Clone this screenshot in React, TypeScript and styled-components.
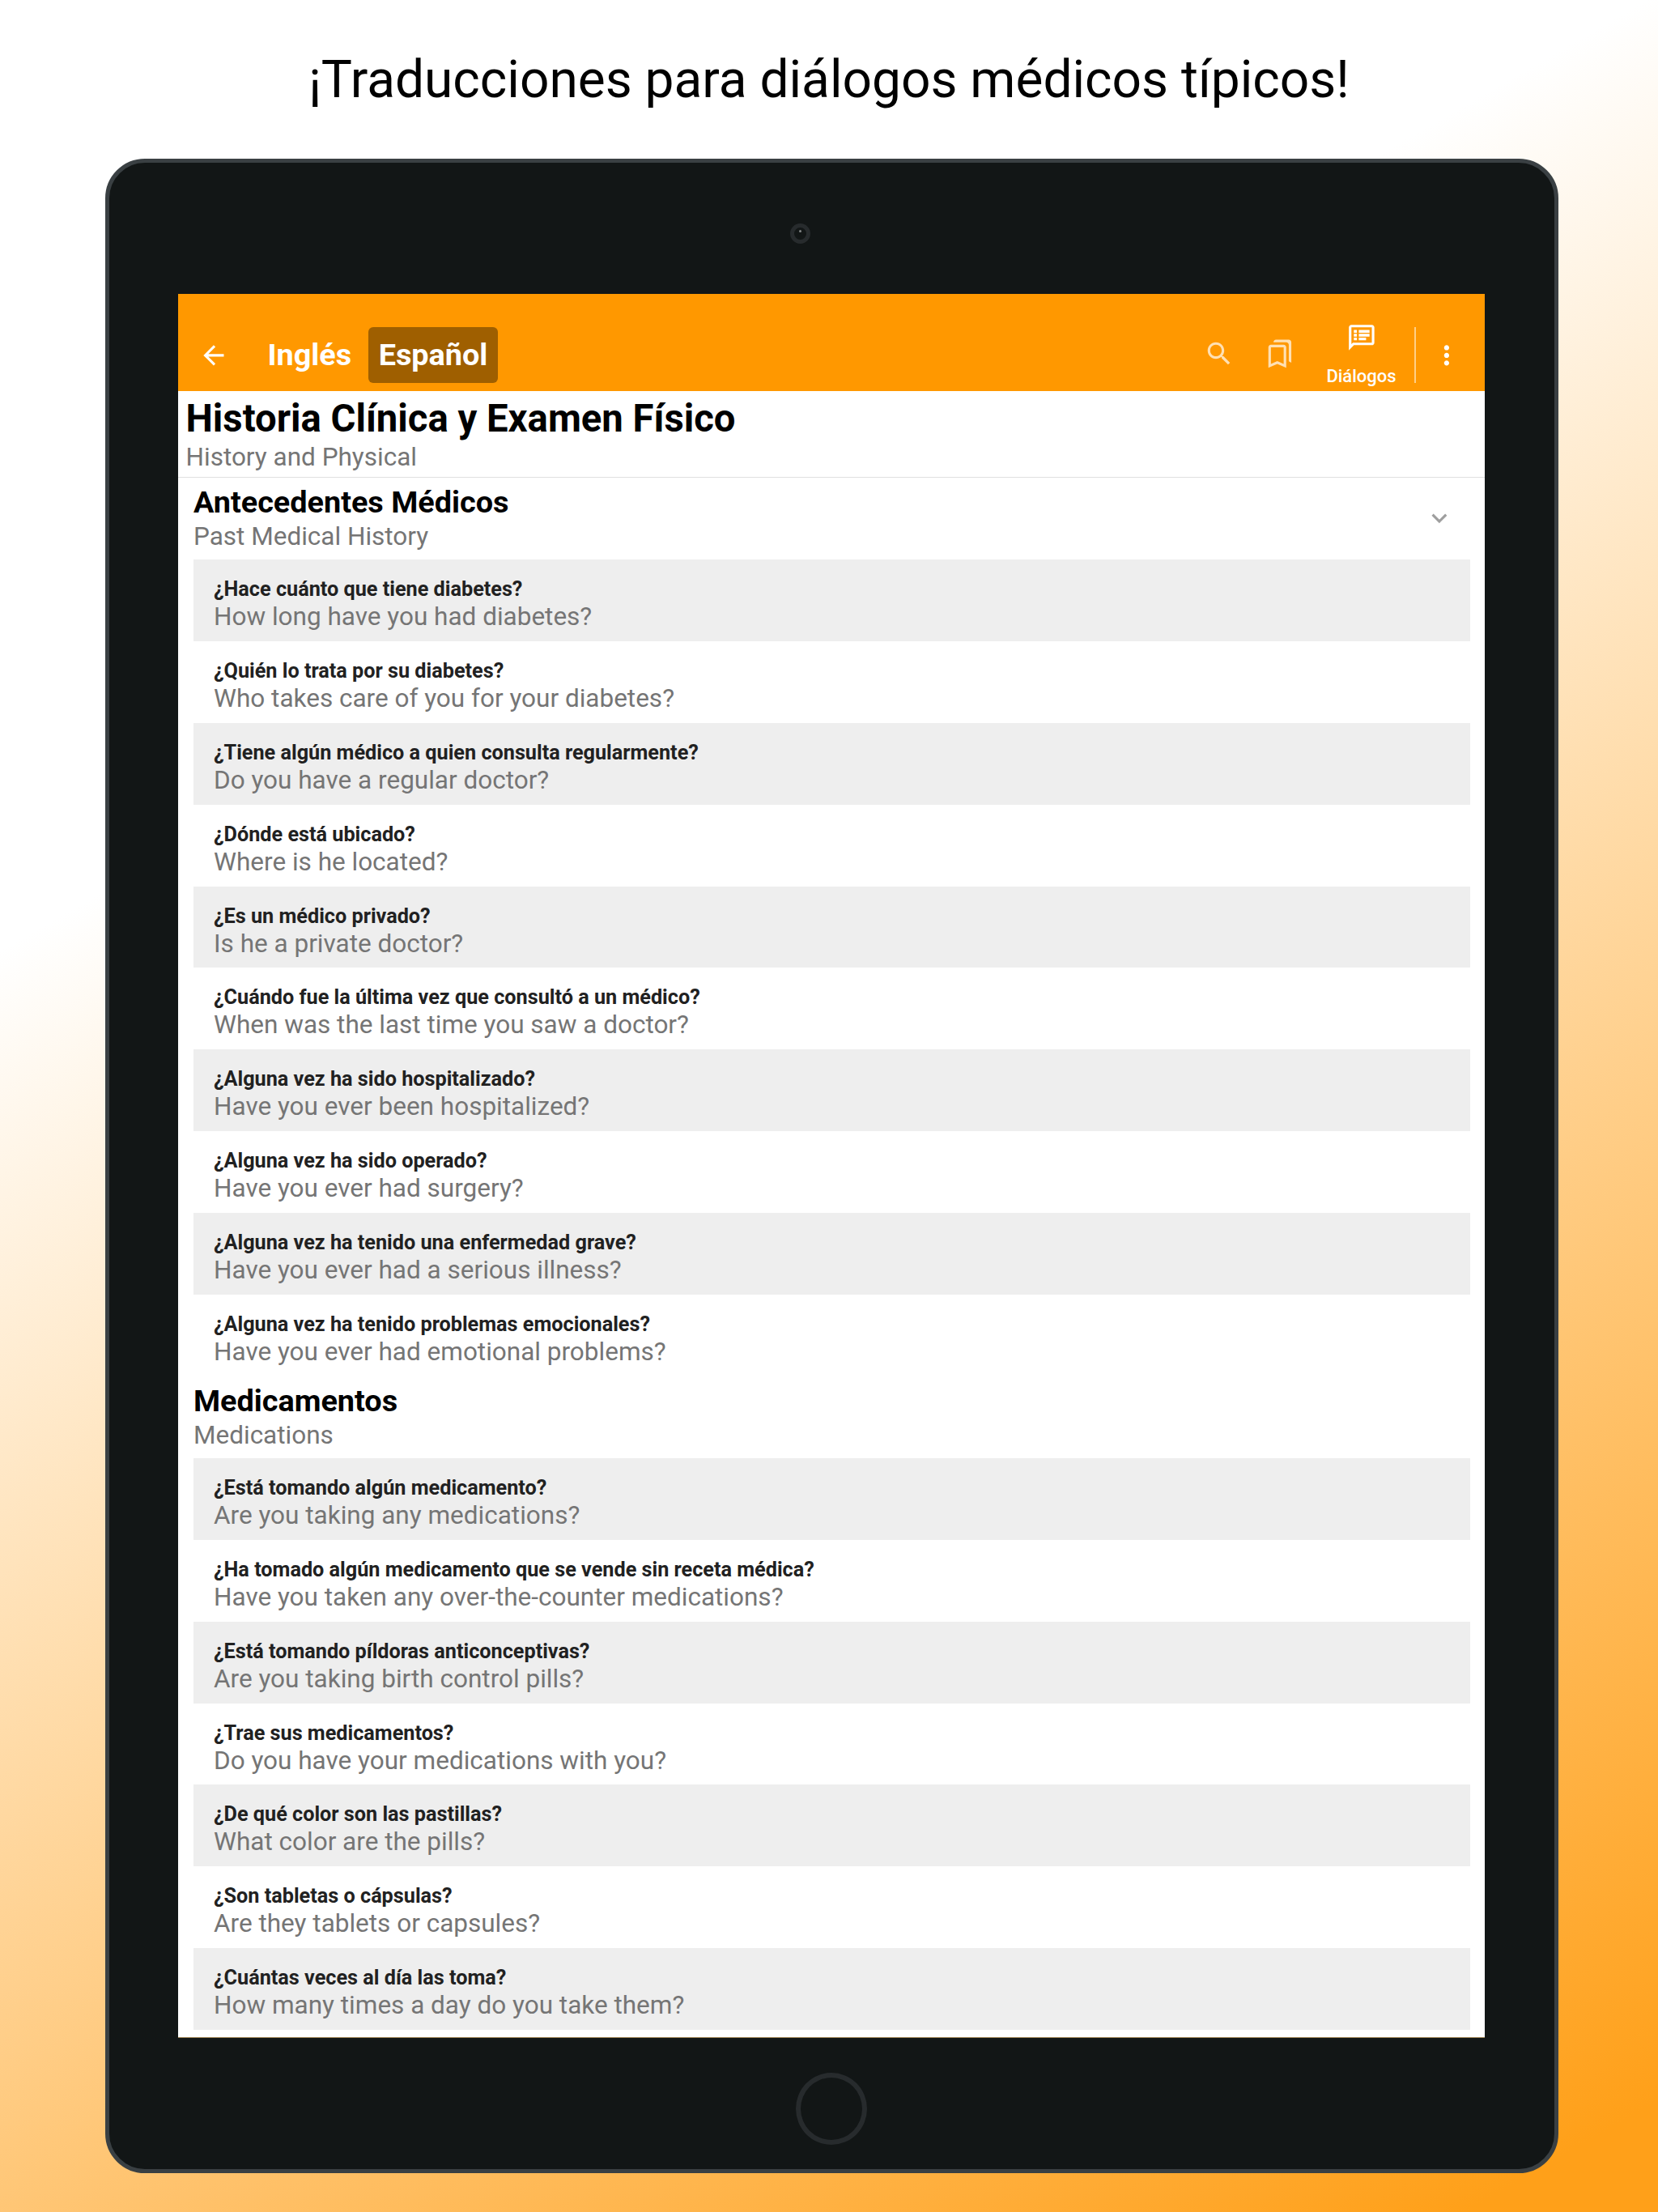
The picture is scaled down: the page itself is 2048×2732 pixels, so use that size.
import React from 'react';
import styled, { createGlobalStyle } from 'styled-components';

const GlobalStyle = createGlobalStyle`
  * { box-sizing: border-box; }
  body { margin: 0; font-family: Roboto, "Liberation Sans", sans-serif; }
`;

const Page = styled.main`
  display: flex;
  flex-direction: column;
  align-items: center;
  width: 2048px;
  height: 2732px;
  overflow: hidden;
  background: linear-gradient(150deg, #fff 30%, #ffa019 96.5%);
`;

const Headline = styled.h1`
  margin: 0;
  height: 196px;
  padding-top: 61px;
  font-size: 64px;
  font-weight: 400;
  line-height: 75px;
  white-space: nowrap;
  color: #000;
`;

const Tablet = styled.section`
  display: flex;
  flex-direction: column;
  align-items: center;
  width: 1795px;
  height: 2488px;
  margin-left: 6px;
  border: 5px solid #3a4043;
  border-radius: 49px;
  background: #121616;
`;

const TopBezel = styled.div`
  display: flex;
  justify-content: center;
  width: 100%;
  height: 162px;
  padding: 75px 78px 0 0;
`;

const Camera = styled.div`
  display: flex;
  justify-content: center;
  width: 25px;
  height: 25px;
  padding-top: 3px;
  border: 5px solid #272b2d;
  border-radius: 50%;
`;

const Lens = styled.span`
  width: 3px;
  height: 3px;
  border-radius: 50%;
  background: #848888;
`;

const Screen = styled.div`
  width: 1614px;
  height: 2154px;
  overflow: hidden;
  flex: none;
  background: #fff;
  border-bottom: 1px solid #a08658;
`;

const BottomBezel = styled.div`
  display: flex;
  justify-content: center;
  padding-top: 43px;
`;

const HomeButton = styled.div`
  width: 88px;
  height: 89px;
  border: 6px solid #272b2d;
  border-radius: 50%;
`;

const AppBar = styled.header`
  display: flex;
  align-items: flex-start;
  height: 120px;
  padding: 41px 9px 0 22px;
  background: #ff9800;
  color: #fff;
`;

const Languages = styled.nav`
  display: flex;
  gap: 7.5px;
  margin-left: 31.5px;
`;

const Language = styled.button<{ $active?: boolean }>`
  height: 69px;
  padding: 0 13px 1px;
  border: 0;
  border-radius: 6px;
  background: ${({ $active }) => ($active ? '#9f5f00' : 'transparent')};
  color: #fff;
  font: 700 37.8px/66px Roboto, sans-serif;
`;

const Actions = styled.div`
  display: flex;
  align-items: flex-start;
  margin-left: auto;
`;

const Glyph = styled.svg<{ $dim?: boolean }>`
  display: block;
  flex: none;
  width: 37.8px;
  height: 37.8px;
  fill: currentColor;
  opacity: ${({ $dim }) => ($dim ? 0.7 : 1)};
`;

const IconSlot = styled.div<{ $width: number; $top: number }>`
  display: flex;
  justify-content: center;
  width: ${({ $width }) => $width}px;
  padding-top: ${({ $top }) => $top}px;
`;

const DialogTab = styled.div`
  display: flex;
  flex-direction: column;
  align-items: center;
  width: 110px;
  margin: -6px 0 0 7.5px;
  font-size: 22px;
  font-weight: 500;
  line-height: 26px;
`;

const DialogLabel = styled.span`
  margin-top: 16px;
`;

const Divider = styled.span`
  width: 2px;
  height: 69px;
  margin-left: 10.5px;
  background: #ffcf86;
`;

const Title = styled.header`
  height: 107px;
  padding: 8px 9.5px 0;
  border-bottom: 1px solid #e0e0e0;
`;

const TitleText = styled.h2`
  margin: 0 0 3px;
  font-size: 47.25px;
  font-weight: 700;
  line-height: 52px;
  color: #000;
`;

const Translation = styled.p<{ $height?: number }>`
  margin: 0;
  font-size: 31.5px;
  line-height: ${({ $height = 37 }) => $height}px;
  color: #757575;
`;

const Section = styled.section`
  padding: 0 18.5px 0 19px;
`;

const SectionHead = styled.div`
  display: flex;
  justify-content: space-between;
  height: 101px;
  padding: 8px 18.5px 0 0;
`;

const SectionTitle = styled.h3`
  margin: 0 0 2px;
  font-size: 37.8px;
  font-weight: 700;
  line-height: 44px;
  color: #000;
`;

const Chevron = styled.div`
  padding-top: 23px;
  color: #9e9e9e;
`;

const Row = styled.article<{ $shaded: boolean }>`
  height: 100.9px;
  padding: 22px 25px 0;
  background: ${({ $shaded }) => ($shaded ? '#eee' : '#fff')};
`;

const Question = styled.h4`
  margin: 0;
  font-size: 25.23px;
  font-weight: 700;
  line-height: 29px;
  color: #212121;
`;

const history: [string, string][] = [
  ['¿Hace cuánto que tiene diabetes?', 'How long have you had diabetes?'],
  ['¿Quién lo trata por su diabetes?', 'Who takes care of you for your diabetes?'],
  ['¿Tiene algún médico a quien consulta regularmente?', 'Do you have a regular doctor?'],
  ['¿Dónde está ubicado?', 'Where is he located?'],
  ['¿Es un médico privado?', 'Is he a private doctor?'],
  ['¿Cuándo fue la última vez que consultó a un médico?', 'When was the last time you saw a doctor?'],
  ['¿Alguna vez ha sido hospitalizado?', 'Have you ever been hospitalized?'],
  ['¿Alguna vez ha sido operado?', 'Have you ever had surgery?'],
  ['¿Alguna vez ha tenido una enfermedad grave?', 'Have you ever had a serious illness?'],
  ['¿Alguna vez ha tenido problemas emocionales?', 'Have you ever had emotional problems?'],
];

const medications: [string, string][] = [
  ['¿Está tomando algún medicamento?', 'Are you taking any medications?'],
  ['¿Ha tomado algún medicamento que se vende sin receta médica?', 'Have you taken any over-the-counter medications?'],
  ['¿Está tomando píldoras anticonceptivas?', 'Are you taking birth control pills?'],
  ['¿Trae sus medicamentos?', 'Do you have your medications with you?'],
  ['¿De qué color son las pastillas?', 'What color are the pills?'],
  ['¿Son tabletas o cápsulas?', 'Are they tablets or capsules?'],
  ['¿Cuántas veces al día las toma?', 'How many times a day do you take them?'],
];

const icons = {
  back: 'M20 11H7.83l5.59-5.59L12 4l-8 8 8 8 1.41-1.41L7.83 13H20v-2z',
  search:
    'M15.5 14h-.79l-.28-.27C15.41 12.59 16 11.11 16 9.5 16 5.91 13.09 3 9.5 3S3 5.91 3 9.5 5.91 16 9.5 16c1.61 0 3.09-.59 4.23-1.57l.27.28v.79l5 4.99L20.49 19l-4.99-5zm-6 0C7.01 14 5 11.99 5 9.5S7.01 5 9.5 5 14 7.01 14 9.5 11.99 14 9.5 14z',
  bookmarks:
    'M15 7v12.97l-4.21-1.81-.79-.34-.79.34L5 19.97V7h10m4-6H8.99C7.89 1 7 1.9 7 3h10c1.1 0 2 .9 2 2v13l2 1V3c0-1.1-.9-2-2-2zm-4 4H5c-1.1 0-2 .9-2 2v16l7-3 7 3V7c0-1.1-.9-2-2-2z',
  dialog:
    'M20 2H4c-1.1 0-1.99.9-1.99 2L2 22l4-4h14c1.1 0 2-.9 2-2V4c0-1.1-.9-2-2-2zm0 14H5.17L4 17.17V4h16v12zM5.9 6h2.4v2.2H5.9zM9.8 6h8.4v2.2H9.8zM5.9 9h2.4v2.2H5.9zM9.8 9h8.4v2.2H9.8zM5.9 12h2.4v2.2H5.9zM9.8 12h5.7v2.2H9.8z',
  more: 'M12 8c1.1 0 2-.9 2-2s-.9-2-2-2-2 .9-2 2 .9 2 2 2zm0 2c-1.1 0-2 .9-2 2s.9 2 2 2 2-.9 2-2-.9-2-2-2zm0 6c-1.1 0-2 .9-2 2s.9 2 2 2 2-.9 2-2-.9-2-2-2z',
  chevron: 'M7.41 8.59 12 13.17l4.59-4.58L18 10l-6 6-6-6 1.41-1.41z',
};

const Icon = ({ name, dim }: { name: keyof typeof icons; dim?: boolean }) => (
  <Glyph viewBox="0 0 24 24" $dim={dim} aria-hidden>
    <path d={icons[name]} />
  </Glyph>
);

const Rows = ({ items }: { items: [string, string][] }) => (
  <>
    {items.map(([question, translation], i) => (
      <Row key={question} $shaded={i % 2 === 0}>
        <Question>{question}</Question>
        <Translation $height={39}>{translation}</Translation>
      </Row>
    ))}
  </>
);

export default function App() {
  return (
    <>
      <GlobalStyle />
      <Page>
        <Headline>¡Traducciones para diálogos médicos típicos!</Headline>
        <Tablet>
          <TopBezel>
            <Camera>
              <Lens />
            </Camera>
          </TopBezel>
          <Screen>
            <AppBar>
              <IconSlot $width={44} $top={16}>
                <Icon name="back" />
              </IconSlot>
              <Languages>
                <Language>Inglés</Language>
                <Language $active>Español</Language>
              </Languages>
              <Actions>
                <IconSlot $width={75.6} $top={14}>
                  <Icon name="search" dim />
                </IconSlot>
                <IconSlot $width={75.6} $top={14}>
                  <Icon name="bookmarks" dim />
                </IconSlot>
                <DialogTab>
                  <Icon name="dialog" />
                  <DialogLabel>Diálogos</DialogLabel>
                </DialogTab>
                <Divider />
                <IconSlot $width={76} $top={16}>
                  <Icon name="more" />
                </IconSlot>
              </Actions>
            </AppBar>
            <Title>
              <TitleText>Historia Clínica y Examen Físico</TitleText>
              <Translation>History and Physical</Translation>
            </Title>
            <Section>
              <SectionHead>
                <div>
                  <SectionTitle>Antecedentes Médicos</SectionTitle>
                  <Translation>Past Medical History</Translation>
                </div>
                <Chevron>
                  <Icon name="chevron" />
                </Chevron>
              </SectionHead>
              <Rows items={history} />
            </Section>
            <Section>
              <SectionHead>
                <div>
                  <SectionTitle>Medicamentos</SectionTitle>
                  <Translation>Medications</Translation>
                </div>
              </SectionHead>
              <Rows items={medications} />
            </Section>
          </Screen>
          <BottomBezel>
            <HomeButton />
          </BottomBezel>
        </Tablet>
      </Page>
    </>
  );
}
